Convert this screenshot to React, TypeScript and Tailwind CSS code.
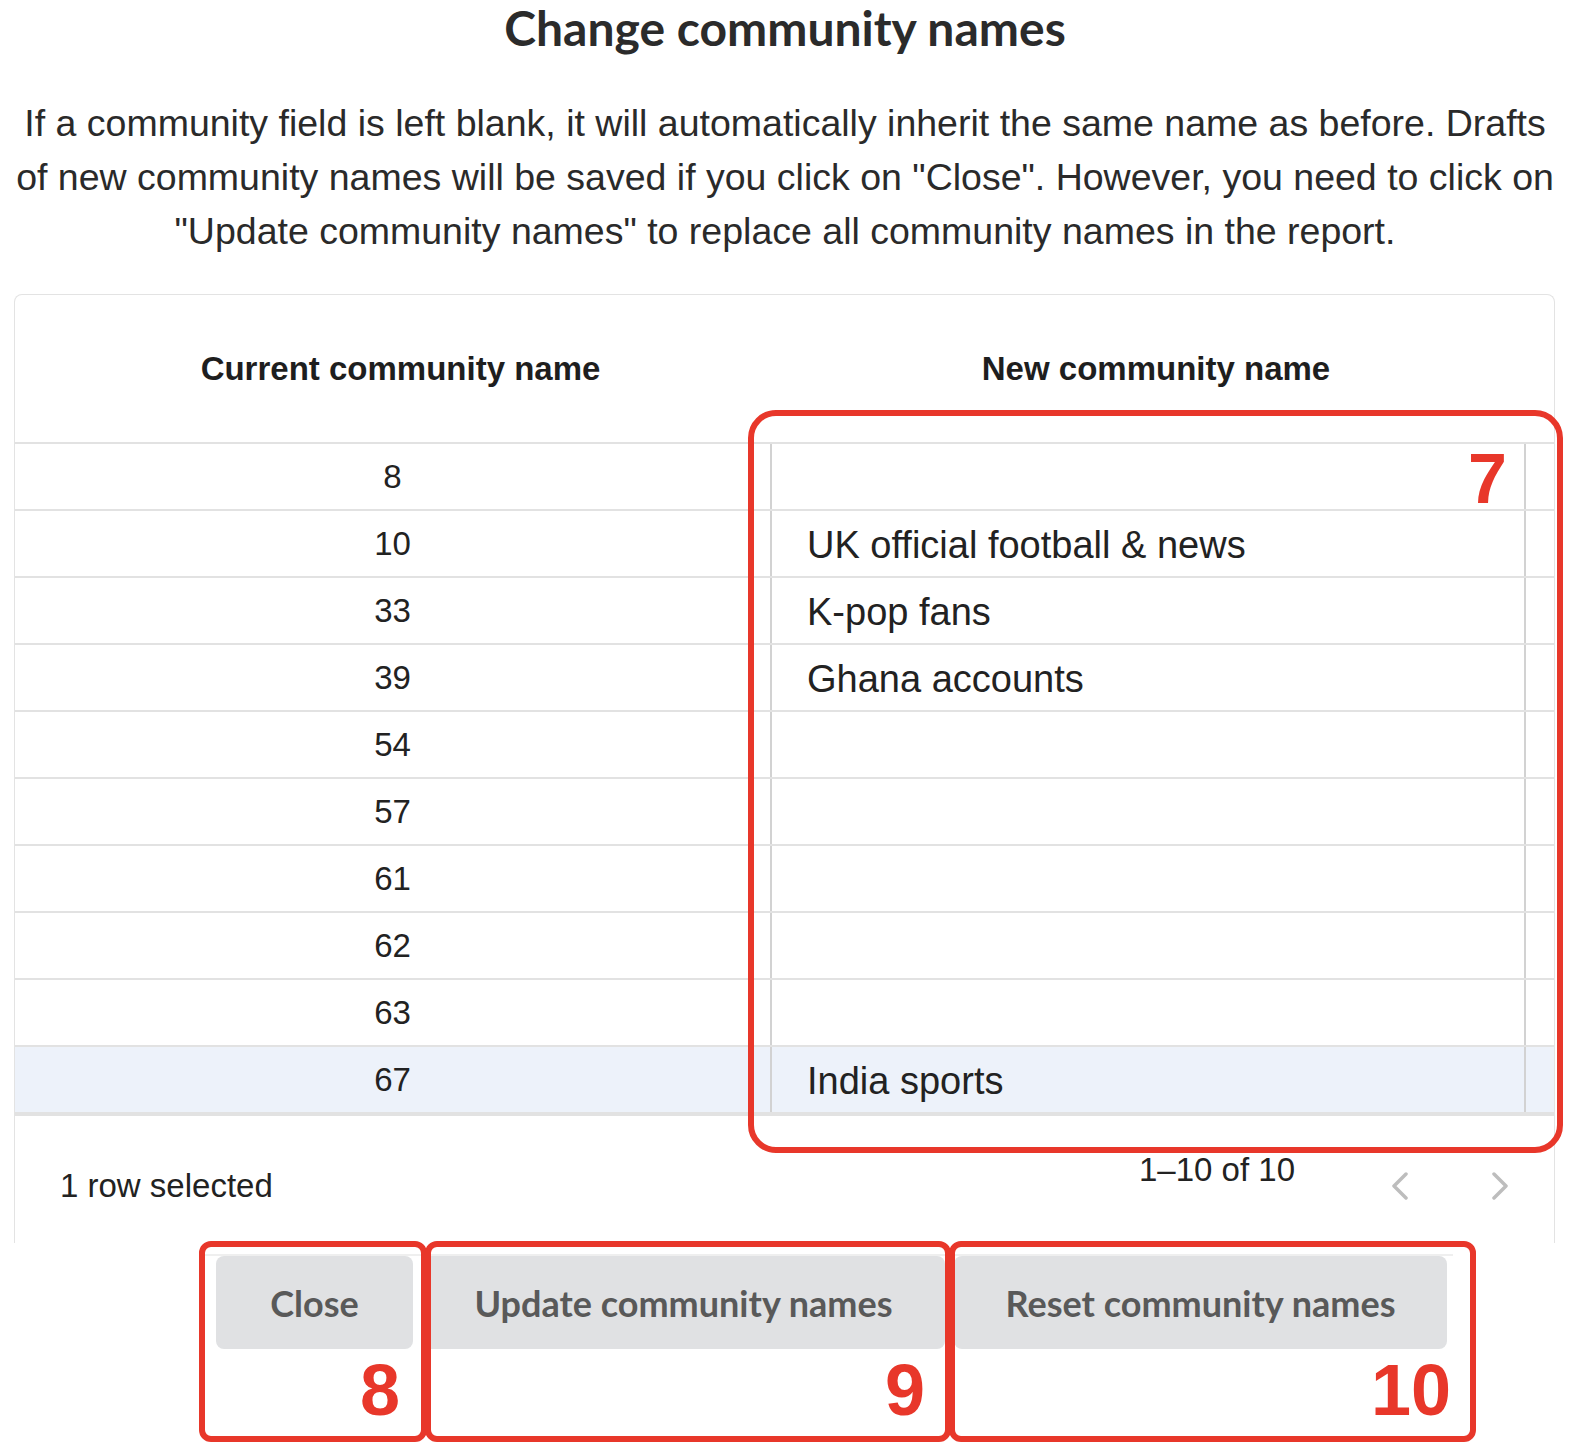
import React from 'react';

interface Row {
  current: string;
  next: string;
  selected?: boolean;
}

const rows: Row[] = [
  { current: '8', next: '' },
  { current: '10', next: 'UK official football & news' },
  { current: '33', next: 'K-pop fans' },
  { current: '39', next: 'Ghana accounts' },
  { current: '54', next: '' },
  { current: '57', next: '' },
  { current: '61', next: '' },
  { current: '62', next: '' },
  { current: '63', next: '' },
  { current: '67', next: 'India sports', selected: true },
];

const Chevron: React.FC<{ dir: 'left' | 'right' }> = ({ dir }) => (
  <svg width="18" height="28" viewBox="0 0 18 28" fill="none">
    <polyline
      points={dir === 'left' ? '15,2 3,14 15,26' : '3,2 15,14 3,26'}
      stroke="#bdbdbd"
      strokeWidth="3.5"
      strokeLinecap="round"
      strokeLinejoin="round"
    />
  </svg>
);

const App: React.FC = () => {
  return (
    <div className="relative w-[1570px] h-[1450px] overflow-hidden bg-white font-['Liberation_Sans',Arial,sans-serif] text-[#222]">
      {/* Title + help text */}
      <h1 className="text-center font-['Lato',sans-serif] font-bold text-[48px] leading-[56px] text-[#2b2b2b]">
        Change community names
      </h1>
      <p className="mt-[40px] text-center text-[37.5px] leading-[54px] text-[#2a2a2a] whitespace-nowrap">
        If a community field is left blank, it will automatically inherit the same name as before. Drafts
        <br />
        of new community names will be saved if you click on "Close". However, you need to click on
        <br />
        "Update community names" to replace all community names in the report.
      </p>

      {/* Table card */}
      <div className="ml-[14px] mt-[36px] w-[1541px] h-[949px] border border-b-0 border-[#e3e3e3] rounded-t-[8px] flex flex-col">
        <div className="h-[149px] flex items-center border-b-2 border-[#e2e2e2] text-[33px] font-bold text-[#1e1e1e]">
          <div className="w-[755px] pl-4 text-center">Current community name</div>
          <div className="w-[756px] pl-4 text-center">New community name</div>
        </div>

        {rows.map((row, i) => {
          const last = i === rows.length - 1;
          return (
            <div
              key={row.current}
              className={`flex text-[38px] ${last ? 'h-[69px] border-b-4' : 'h-[67px] border-b-2'} border-[#e2e2e2] ${
                row.selected ? 'bg-[#edf2fa]' : ''
              }`}
            >
              <div className="w-[755px] flex items-center justify-center text-[33px]">{row.current}</div>
              <div className="w-[756px] flex items-center pl-[35px] pt-[4px] border-l-2 border-r-2 border-[#d2d2d2]">
                {row.next}
              </div>
            </div>
          );
        })}

        <div className="flex-1 flex items-center justify-between pt-[12px] text-[33px]">
          <span className="pl-[45px]">1 row selected</span>
          <div className="flex items-center pr-[45px]">
            <span className="pb-[32px] mr-[96px]">1–10 of 10</span>
            <div className="flex items-center gap-[82px]">
              <Chevron dir="left" />
              <Chevron dir="right" />
            </div>
          </div>
        </div>
      </div>

      {/* Action buttons */}
      <div className="ml-[205px] mt-[11px] w-[1248px] border-t-2 border-[#efefef] pl-[11px] flex gap-[9px] font-['Lato',sans-serif] font-bold text-[36px] text-[#595959]">
        <button className="w-[197px] h-[93px] rounded-[8px] bg-[#e0e1e3]">Close</button>
        <button className="w-[523px] h-[93px] rounded-[8px] bg-[#e0e1e3]">Update community names</button>
        <button className="w-[493px] h-[93px] rounded-[8px] bg-[#e0e1e3]">Reset community names</button>
      </div>

      {/* Annotation overlays */}
      <div className="absolute left-[748px] top-[410px] w-[815px] h-[743px] border-[6px] border-[#e8372a] rounded-[28px] pointer-events-none">
        <span className="absolute right-[50px] top-[28px] text-[70px] leading-none font-bold text-[#e8372a]">7</span>
      </div>
      <div className="absolute left-[199px] top-[1241px] w-[228px] h-[201px] border-[6px] border-[#e8372a] rounded-[12px] pointer-events-none">
        <span className="absolute right-[21px] bottom-[10px] text-[72px] leading-none font-bold text-[#e8372a]">8</span>
      </div>
      <div className="absolute left-[425px] top-[1241px] w-[526px] h-[201px] border-[6px] border-[#e8372a] rounded-[12px] pointer-events-none">
        <span className="absolute right-[20px] bottom-[10px] text-[72px] leading-none font-bold text-[#e8372a]">9</span>
      </div>
      <div className="absolute left-[949px] top-[1241px] w-[527px] h-[201px] border-[6px] border-[#e8372a] rounded-[12px] pointer-events-none">
        <span className="absolute right-[19px] bottom-[10px] text-[72px] leading-none font-bold text-[#e8372a]">10</span>
      </div>
    </div>
  );
};

export default App;
